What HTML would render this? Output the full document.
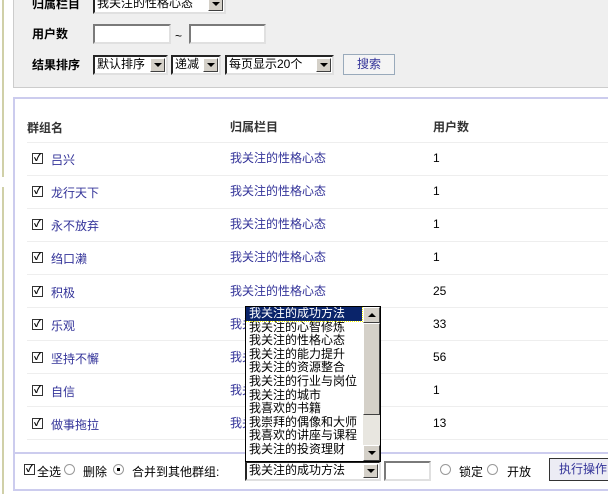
<!DOCTYPE html>
<html><head><meta charset="utf-8"><style>
*{margin:0;padding:0;box-sizing:border-box}
body{width:608px;height:494px;overflow:hidden;background:#fff;font-family:"Liberation Sans","Noto Sans CJK SC","WenQuanYi Zen Hei",sans-serif;font-size:12px;color:#000;position:relative}
.a{position:absolute;white-space:nowrap}
.b{font-weight:bold}
.sel{position:absolute;height:20px;background:#fff;border:2px inset #888;border-color:#7a7a7a #e0e0e0 #e0e0e0 #7a7a7a;font-size:12px;line-height:15px;padding-left:2px}
.arr{position:absolute;right:1px;top:1px;width:15px;height:14px;background:#d4d0c8;border:1px solid;border-color:#fff #404040 #404040 #fff}
.arr:after{content:"";position:absolute;left:3px;top:4px;border-left:4px solid transparent;border-right:4px solid transparent;border-top:4px solid #000}
.inp{position:absolute;height:20px;background:#fff;border:2px solid;border-color:#7a7a7a #e0e0e0 #e0e0e0 #7a7a7a}
.cb{position:absolute;width:11px;height:11px;border:1px solid #333;background:#fff;font-size:10px;line-height:9px;text-align:center;font-weight:bold}
.lnk{color:#333399}
.sep{position:absolute;left:27px;right:0;height:1px;background:#eee}
.rd{position:absolute;width:11px;height:11px;border-radius:50%;border:1px solid #999;background:#fff}
</style></head><body>
<div class="a" style="left:2px;top:0;width:2px;height:177px;background:#d0d0a8"></div>
<div class="a" style="left:2px;top:187px;width:2px;height:307px;background:#d0d0a8"></div>
<div class="a" style="left:13px;top:-2px;width:600px;height:90px;background:#efefef;border:1px solid #ccc"></div>
<div class="a b" style="left:32px;top:-5px">归属栏目</div>
<div class="sel" style="left:93px;top:-6px;width:133px">我关注的性格心态<span class="arr"></span></div>
<div class="a b" style="left:32px;top:25px">用户数</div>
<div class="inp" style="left:93px;top:24px;width:78px"></div>
<div class="a" style="left:175px;top:29px">~</div>
<div class="inp" style="left:189px;top:24px;width:77px"></div>
<div class="a b" style="left:32px;top:56px">结果排序</div>
<div class="sel" style="left:93px;top:55px;width:75px">默认排序<span class="arr"></span></div>
<div class="sel" style="left:171px;top:55px;width:50px">递减<span class="arr"></span></div>
<div class="sel" style="left:225px;top:55px;width:109px">每页显示20个<span class="arr"></span></div>
<div class="a" style="left:343px;top:54px;width:52px;height:21px;border:1px solid #9ab;background:#f4f4f4;color:#333399;text-align:center;line-height:19px">搜索</div>

<div class="a" style="left:13px;top:97px;width:600px;height:394px;border:2px solid #ccccee;border-right:none"></div>
<div class="a b" style="left:27px;top:119px;color:#333">群组名</div>
<div class="a b" style="left:230px;top:118px;color:#333">归属栏目</div>
<div class="a b" style="left:433px;top:118px;color:#333">用户数</div>

<div class="sep" style="top:142px"></div>
<div class="cb" style="left:32px;top:153px">✓</div><div class="a lnk" style="left:51px;top:151px">吕兴</div><div class="a lnk" style="left:230px;top:149px">我关注的性格心态</div><div class="a" style="left:433px;top:151px">1</div>
<div class="sep" style="top:175px"></div>
<div class="cb" style="left:32px;top:186px">✓</div><div class="a lnk" style="left:51px;top:184px">龙行天下</div><div class="a lnk" style="left:230px;top:182px">我关注的性格心态</div><div class="a" style="left:433px;top:184px">1</div>
<div class="sep" style="top:208px"></div>
<div class="cb" style="left:32px;top:219px">✓</div><div class="a lnk" style="left:51px;top:217px">永不放弃</div><div class="a lnk" style="left:230px;top:215px">我关注的性格心态</div><div class="a" style="left:433px;top:217px">1</div>
<div class="sep" style="top:241px"></div>
<div class="cb" style="left:32px;top:252px">✓</div><div class="a lnk" style="left:51px;top:250px">绉口濑</div><div class="a lnk" style="left:230px;top:248px">我关注的性格心态</div><div class="a" style="left:433px;top:250px">1</div>
<div class="sep" style="top:274px"></div>
<div class="cb" style="left:32px;top:286px">✓</div><div class="a lnk" style="left:51px;top:284px">积极</div><div class="a lnk" style="left:230px;top:282px">我关注的性格心态</div><div class="a" style="left:433px;top:284px">25</div>
<div class="sep" style="top:307px"></div>
<div class="cb" style="left:32px;top:319px">✓</div><div class="a lnk" style="left:51px;top:317px">乐观</div><div class="a lnk" style="left:230px;top:315px">我关注的性格心态</div><div class="a" style="left:433px;top:317px">33</div>
<div class="sep" style="top:340px"></div>
<div class="cb" style="left:32px;top:352px">✓</div><div class="a lnk" style="left:51px;top:350px">坚持不懈</div><div class="a lnk" style="left:230px;top:348px">我关注的性格心态</div><div class="a" style="left:433px;top:350px">56</div>
<div class="sep" style="top:373px"></div>
<div class="cb" style="left:32px;top:385px">✓</div><div class="a lnk" style="left:51px;top:383px">自信</div><div class="a lnk" style="left:230px;top:381px">我关注的性格心态</div><div class="a" style="left:433px;top:383px">1</div>
<div class="sep" style="top:406px"></div>
<div class="cb" style="left:32px;top:418px">✓</div><div class="a lnk" style="left:51px;top:416px">做事拖拉</div><div class="a lnk" style="left:230px;top:414px">我关注的性格心态</div><div class="a" style="left:433px;top:416px">13</div>
<div class="sep" style="top:439px"></div>

<div class="a" style="left:13px;top:452px;width:600px;height:2px;background:#ccccee"></div>
<div class="cb" style="left:24px;top:464px">✓</div><div class="a" style="left:37px;top:463px">全选</div>
<div class="rd" style="left:64px;top:464px"></div><div class="a" style="left:83px;top:463px">删除</div>
<div class="rd" style="left:113px;top:464px"></div><div class="a" style="left:117px;top:468px;width:3px;height:3px;background:#000"></div>
<div class="a" style="left:132px;top:463px">合并到其他群组:</div>
<div class="sel" style="left:245px;top:461px;width:80px;width:136px">我关注的成功方法<span class="arr"></span></div>
<div class="inp" style="left:384px;top:461px;width:47px"></div>
<div class="rd" style="left:440px;top:464px"></div><div class="a" style="left:459px;top:463px">锁定</div>
<div class="rd" style="left:487px;top:464px"></div><div class="a" style="left:507px;top:463px">开放</div>
<div class="a" style="left:549px;top:458px;width:70px;height:23px;border:1px solid #333;background:#ececf4;color:#333399;line-height:21px;padding-left:9px">执行操作</div>

<div class="a" style="left:245px;top:306px;width:136px;height:156px;background:#fff;border:1px solid #000;overflow:hidden;font-size:12px;line-height:13.6px">
<div style="width:116px;padding-left:3px;background:#0a246a;color:#fff;outline:1px dotted #ff0">我关注的成功方法</div>
<div style="padding-left:3px">我关注的心智修炼</div>
<div style="padding-left:3px">我关注的性格心态</div>
<div style="padding-left:3px">我关注的能力提升</div>
<div style="padding-left:3px">我关注的资源整合</div>
<div style="padding-left:3px">我关注的行业与岗位</div>
<div style="padding-left:3px">我关注的城市</div>
<div style="padding-left:3px">我喜欢的书籍</div>
<div style="padding-left:3px">我崇拜的偶像和大师</div>
<div style="padding-left:3px">我喜欢的讲座与课程</div>
<div style="padding-left:3px">我关注的投资理财</div>
<div style="position:absolute;right:0;top:0;width:17px;height:154px;background:#e8e6e0"></div>
<div style="position:absolute;right:0;top:0;width:17px;height:16px;background:#d4d0c8;border:1px solid;border-color:#fff #404040 #404040 #fff"><div style="position:absolute;left:4px;top:5px;border-left:4px solid transparent;border-right:4px solid transparent;border-bottom:4px solid #000"></div></div>
<div style="position:absolute;right:0;top:16px;width:17px;height:92px;background:#d4d0c8;border:1px solid;border-color:#fff #404040 #404040 #fff"></div>
<div style="position:absolute;right:0;top:138px;width:17px;height:16px;background:#d4d0c8;border:1px solid;border-color:#fff #404040 #404040 #fff"><div style="position:absolute;left:4px;top:5px;border-left:4px solid transparent;border-right:4px solid transparent;border-top:4px solid #000"></div></div>
</div>
</body></html>
